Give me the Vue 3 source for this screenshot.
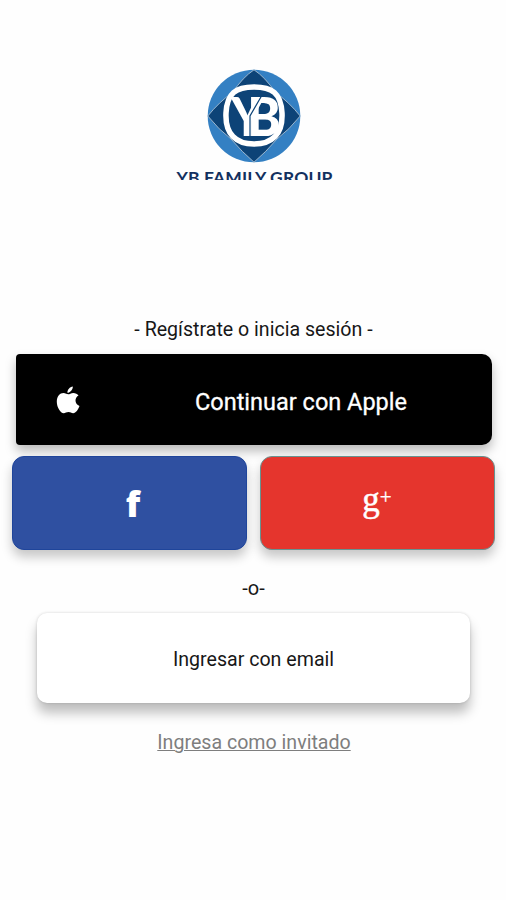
<script setup>
const brand = 'YB FAMILY GROUP'
</script>

<template>
  <main class="screen">
    <header class="brand">
      <svg class="emblem" viewBox="0 0 94 94" role="img" aria-label="YB Family Group">
        <circle cx="47" cy="47" r="46.3" fill="#3480c3" />
        <path d="M47 .8Q58 8 68.500 23.500Q82 33 93.200 47Q82 61 70 70Q59 83 47 93.200Q35 83 24 70Q12 61 .8 47Q12 33 25.500 23.500Q36 8 47 .8Z" fill="#0d4377" stroke="#9cb7cf" stroke-width="1" />
        <path d="M47 18C65 18 74 24 75 44C76 65 65 75 47 75C29 75 18 65 19 44C20 24 29 18 47 18Z" fill="#0d4377" stroke="#fff" stroke-width="5.500" />
        <text class="mono" x="0 17" y="0" transform="translate(24 67) scale(.95 1)">YB</text>
        <path d="M54.500 27L43 47V68" fill="none" stroke="#0d4377" stroke-width="1.200" />
      </svg>
      <div class="wordmark"><span>{{ brand }}</span></div>
    </header>

    <p class="intro">- Regístrate o inicia sesión -</p>

    <button class="btn apple">
      <svg class="apple-icon" viewBox="0 0 24 28">
        <path d="M16.800.5C17 3.600 14.200 6.800 11.400 6.800C11.200 3.900 13.900.8 16.800.5ZM12.200 8.300C13.500 8.300 15 6.900 17.300 6.900C19.500 6.900 21.400 8 22.500 9.600C18 12.200 18.800 18.300 23.500 20C22.300 23.500 19.800 27.200 17.200 27.200C15.400 27.200 14.500 26.100 12.500 26.100C10.500 26.100 9.300 27.200 7.700 27.200C4.500 27.200.8 21.300.8 15.700C.8 10.300 4 7 7.400 7C9.500 7 11 8.300 12.200 8.300Z" fill="#fff" />
      </svg>
      <span class="apple-label">Continuar con Apple</span>
    </button>

    <div class="social">
      <button class="btn facebook"><span class="f">f</span></button>
      <button class="btn google"><span class="g">g</span><span class="plus">+</span></button>
    </div>

    <p class="or">-o-</p>
    <button class="btn email"><span>Ingresar con email</span></button>
    <a class="guest">Ingresa como invitado</a>
  </main>
</template>

<style>
body {
  background: #fefefe;
}
</style>

<style scoped>
.screen {
  box-sizing: border-box;
  width: 506px;
  height: 900px;
  padding-top: 69px;
  display: flex;
  flex-direction: column;
  align-items: center;
  overflow: hidden;
  font-family: Roboto, sans-serif;
  color: #171717;
}
.brand {
  height: 111px;
  display: flex;
  flex-direction: column;
  align-items: center;
  overflow: hidden;
  margin-left: 3px;
}
.emblem {
  width: 94px;
  height: 94px;
  flex: none;
}
.mono {
  font: 900 53px Lato, sans-serif;
  fill: #fff;
}
.wordmark {
  margin-top: 4px;
  height: 13px;
  overflow: hidden;
  font: 700 17.500px/22px Lato, sans-serif;
  letter-spacing: 0.15px;
  white-space: nowrap;
  color: #12305f;
}
.intro {
  margin: 136px 0 0;
  padding-left: 1px;
  font-size: 19.600px;
  line-height: 28px;
}
.btn {
  box-sizing: border-box;
  border: 0;
  padding: 0;
  display: flex;
  align-items: center;
  font-family: inherit;
  color: #fff;
}
.apple {
  width: 476px;
  height: 91px;
  margin-top: 10px;
  margin-left: 1px;
  border-radius: 4px 10px 10px 4px;
  background: #000;
  box-shadow: 0 6px 11px rgba(0, 0, 0, 0.27);
}
.apple-icon {
  width: 24px;
  height: 28px;
  margin-left: 40.500px;
  flex: none;
}
.apple-label {
  margin-left: 115px;
  padding-top: 4px;
  font-size: 23.500px;
  font-weight: 400;
  -webkit-text-stroke: 0.3px #fff;
  white-space: nowrap;
}
.social {
  display: flex;
  gap: 13px;
  margin-top: 11px;
}
.facebook,
.google {
  width: 235px;
  height: 94px;
  border-radius: 12px;
  justify-content: center;
  box-shadow: 0 7px 11px rgba(0, 0, 0, 0.22);
}
.facebook {
  background: #2f50a1;
  border: 1px solid #1f459b;
}
.google {
  background: #e5352d;
  border: 1px solid #679391;
}
.f {
  padding: 1px 0 0 8px;
  font: 800 35px/40px "Open Sans", sans-serif;
}
.g {
  padding-bottom: 7px;
  font: 35px/40px "Liberation Serif", serif;
  -webkit-text-stroke: 0.5px #fff;
}
.plus {
  font: 21px/20px "Liberation Serif", serif;
  padding-bottom: 12px;
  -webkit-text-stroke: 0.3px #fff;
}
.or {
  margin: 25px 0 0;
  padding-left: 1px;
  font-size: 20px;
  line-height: 26px;
}
.email {
  width: 433px;
  height: 90px;
  margin-top: 12px;
  margin-left: 1px;
  border-radius: 10px;
  background: #fff;
  color: #171717;
  font-size: 19.600px;
  justify-content: center;
  padding-top: 2px;
  box-shadow: 0 10px 12px rgba(0, 0, 0, 0.25), 0 0 3px rgba(0, 0, 0, 0.16);
}
.guest {
  margin: 26px 0 0 2px;
  font-size: 19.600px;
  line-height: 28px;
  color: #7e7e7e;
  text-decoration: underline;
  text-decoration-thickness: 1px;
}
</style>
